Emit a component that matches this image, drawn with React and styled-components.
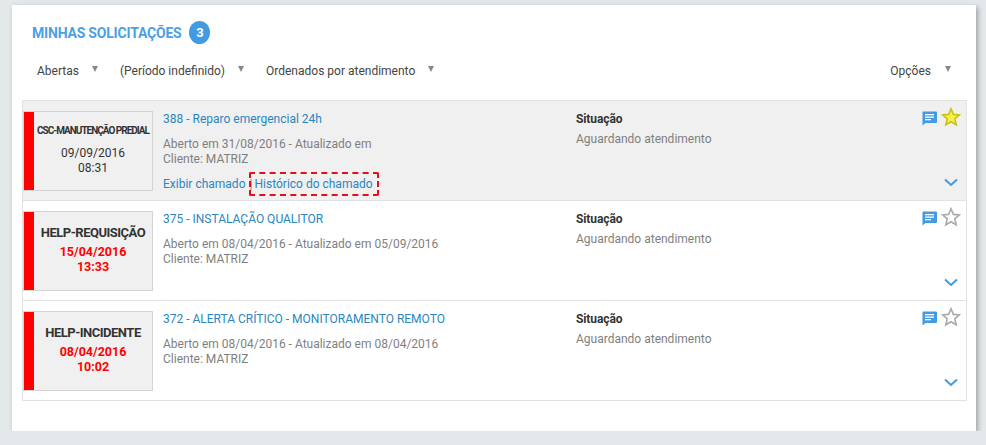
import React from "react";
import styled, { createGlobalStyle } from "styled-components";

const Global = createGlobalStyle`
  html, body { margin: 0; padding: 0; background: #e3e8ea; }
  body { font-family: Roboto, "Liberation Sans", sans-serif; font-size: 12px; color: #333; }
`;

const Card = styled.main`
  width: 964px; height: 426px; margin: 5px 0 0 12px; box-sizing: border-box;
  background: #fff; box-shadow: 2px 2px 5px rgba(0,0,0,.3);
  padding: 16px 9px 0 10px;
`;
const Header = styled.header`
  display: flex; align-items: center; height: 23px; padding-left: 10px;
`;
const Title = styled.h1`
  margin: 0; font-size: 14px; font-weight: 700; color: #4b9fe5; letter-spacing: -0.2px;
`;
const Badge = styled.span`
  width: 21px; height: 23px; border-radius: 50%; margin-left: 8px;
  background: #419ae2; color: #fff; font-size: 13px; font-weight: 700;
  display: flex; align-items: center; justify-content: center;
`;
const Filters = styled.nav`
  display: flex; align-items: center; height: 18px; margin-top: 18px; padding: 0 16px 0 15px;
`;
const Filter = styled.span`
  display: flex; align-items: flex-start; color: #444; font-size: 12px; line-height: 18px;
  margin-right: ${p => p.$mr}px;
  margin-left: ${p => (p.$auto ? "auto" : "0")};
`;
const Arrow = styled.i`
  width: 0; height: 0; margin: 4px 0 0 ${p => p.$ml}px;
  border-left: 3.5px solid transparent; border-right: 3.5px solid transparent; border-top: 6px solid #888;
`;
const List = styled.section`
  margin-top: 20px; border: 1px solid #e2e2e2; border-bottom: 0;
`;
const Row = styled.article`
  display: grid; grid-template-columns: 130px 423px 1fr; height: 99px; position: relative;
  border-bottom: 1px solid #e2e2e2; box-sizing: content-box;
  background: ${p => (p.$active ? "#f0f0f0" : "#fff")};
`;
const Tag = styled.div`
  margin-top: 10px; height: 80px; width: 130px; box-sizing: border-box; border: 1px solid #d4d4d4;
  background: #f0f0f0; display: flex;
`;
const Bar = styled.span`width: 10px; background: #f00; flex: none;`;
const TagBody = styled.div`
  flex: 1; min-width: 0; text-align: center; display: flex; flex-direction: column; align-items: center;
`;
const TagName = styled.div`
  margin-top: ${p => (p.$small ? 12 : 13)}px; height: ${p => (p.$small ? 14 : 16)}px; white-space: nowrap;
  font-size: ${p => (p.$small ? 10 : 13)}px; font-weight: 700; color: #333; line-height: ${p => (p.$small ? 14 : 16)}px;
  letter-spacing: ${p => (p.$small ? "-1px" : "-0.5px")};
`;
const TagDate = styled.div`
  margin-top: ${p => (p.$small ? 8 : 3)}px; line-height: 15px;
  font-size: ${p => (p.$late ? 12.5 : 12)}px;
  font-weight: ${p => (p.$late ? 700 : 400)}; color: ${p => (p.$late ? "#f00" : "#333")};
`;
const Info = styled.div`padding: 10px 0 0 10px;`;
const RowTitle = styled.a`
  display: block; color: #2a86c0; font-size: 12px; line-height: 16px; white-space: nowrap;
`;
const Meta = styled.div`
  margin-top: 10px; color: #7f7f7f; font-size: 12px; line-height: 15px;
`;
const Links = styled.div`
  margin-top: 10px; display: flex; align-items: center; color: #2a86c0; line-height: 15px; height: 15px;
`;
const Sep = styled.span`color: #777; width: 9px; padding-left: 4px; box-sizing: border-box; overflow: hidden;`;
const Dashed = styled.span`
  position: relative; color: #2a86c0;
  &::after {
    content: ""; position: absolute; left: -5px; right: -6px; top: -5px; bottom: -4px;
    border: 2px dashed #e0101c; border-radius: 2px;
  }
`;
const Status = styled.div`padding: 10px 0 0 0;`;
const StatusLabel = styled.div`font-weight: 700; color: #333; font-size: 12px; line-height: 16px; letter-spacing: -0.1px;`;
const StatusValue = styled.div`margin-top: 4px; color: #7f7f7f; font-size: 12px; line-height: 16px;`;
const Icons = styled.div`
  position: absolute; right: 5px; top: 6px; display: flex; align-items: flex-start; gap: 4px;
`;
const Chevron = styled.svg`position: absolute; right: 8px; bottom: 13px;`;

const Chat = () => (
  <svg width="15" height="15" viewBox="0 0 15 15" style={{ marginTop: 4 }}>
    <path d="M1 0.5h13a1 1 0 0 1 1 1v9.5a1 1 0 0 1-1 1H3.5L0.5 14.5V1.5a1 1 0 0 1 .5-1z" fill="#419ae2" />
    <rect x="3" y="3" width="9" height="1.3" fill="#fff" />
    <rect x="3" y="5.5" width="9" height="1.3" fill="#fff" />
    <rect x="3" y="8" width="6" height="1.3" fill="#fff" />
  </svg>
);
const Star = ({ on }) => (
  <svg width="20" height="20" viewBox="0 0 20 20">
    <path d="M10 1.8l2.4 5.6 6 .5-4.6 4 1.4 5.9L10 14.7l-5.2 3.1 1.4-5.9-4.6-4 6-.5z"
      fill={on ? "#f3f04d" : "none"} stroke={on ? "#c9c414" : "#aaa"} strokeWidth="1.6" strokeLinejoin="miter" />
  </svg>
);
const Down = () => (
  <Chevron width="14" height="9" viewBox="0 0 14 9">
    <path d="M1 1.5l6 5.5 6-5.5" fill="none" stroke="#419ae2" strokeWidth="2" />
  </Chevron>
);

const rows = [
  { name: "CSC-MANUTENÇÃO PREDIAL", small: true, date: "09/09/2016", time: "08:31", title: "388 - Reparo emergencial 24h", meta: "Aberto em 31/08/2016 - Atualizado em", active: true },
  { name: "HELP-REQUISIÇÃO", date: "15/04/2016", time: "13:33", late: true, title: "375 - INSTALAÇÃO QUALITOR", meta: "Aberto em 08/04/2016 - Atualizado em 05/09/2016" },
  { name: "HELP-INCIDENTE", date: "08/04/2016", time: "10:02", late: true, title: "372 - ALERTA CRÍTICO - MONITORAMENTO REMOTO", meta: "Aberto em 08/04/2016 - Atualizado em 08/04/2016" },
];

export default function App() {
  return (
    <>
      <Global />
      <Card>
        <Header>
          <Title>MINHAS SOLICITAÇÕES</Title>
          <Badge>3</Badge>
        </Header>
        <Filters>
          <Filter $mr={22}>Abertas<Arrow $ml={13} /></Filter>
          <Filter $mr={22}>(Período indefinido)<Arrow $ml={13} /></Filter>
          <Filter>Ordenados por atendimento<Arrow $ml={13} /></Filter>
          <Filter $auto>Opções<Arrow $ml={14} /></Filter>
        </Filters>
        <List>
          {rows.map(r => (
            <Row key={r.title} $active={r.active}>
              <Tag>
                <Bar />
                <TagBody>
                  <TagName $small={r.small}>{r.name}</TagName>
                  <TagDate $late={r.late} $small={r.small}>{r.date}<br />{r.time}</TagDate>
                </TagBody>
              </Tag>
              <Info>
                <RowTitle>{r.title}</RowTitle>
                <Meta>{r.meta}<br />Cliente: MATRIZ</Meta>
                {r.active && (
                  <Links>Exibir chamado<Sep>|</Sep><Dashed>Histórico do chamado</Dashed></Links>
                )}
              </Info>
              <Status>
                <StatusLabel>Situação</StatusLabel>
                <StatusValue>Aguardando atendimento</StatusValue>
              </Status>
              <Icons><Chat /><Star on={r.active} /></Icons>
              <Down />
            </Row>
          ))}
        </List>
      </Card>
    </>
  );
}
